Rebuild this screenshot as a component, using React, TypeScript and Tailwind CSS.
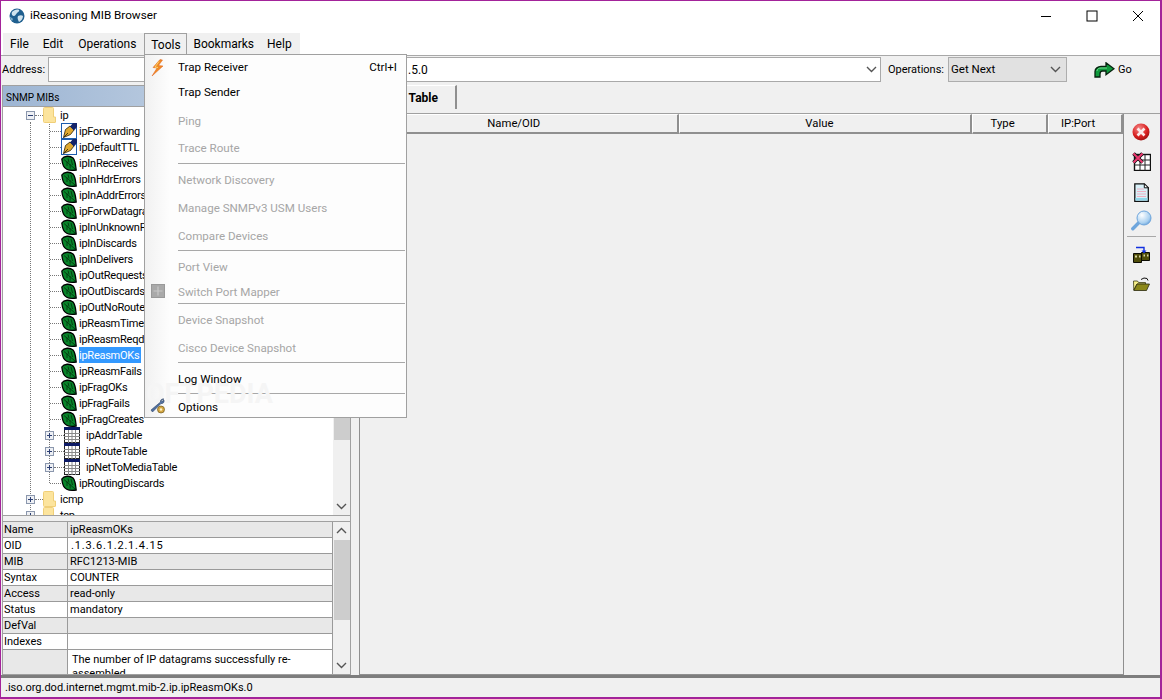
import React from "react";

const leaves = [
  "ipInReceives", "ipInHdrErrors", "ipInAddrErrors", "ipForwDatagrams", "ipInUnknownProtos",
  "ipInDiscards", "ipInDelivers", "ipOutRequests", "ipOutDiscards", "ipOutNoRoutes",
  "ipReasmTimeout", "ipReasmReqds", "ipReasmOKs", "ipReasmFails", "ipFragOKs", "ipFragFails", "ipFragCreates",
];

const props = [
  ["Name", "ipReasmOKs"], ["OID", ".1.3.6.1.2.1.4.15"], ["MIB", "RFC1213-MIB"], ["Syntax", "COUNTER"],
  ["Access", "read-only"], ["Status", "mandatory"], ["DefVal", ""], ["Indexes", ""],
];

const Chevron = ({ up = false, className = "" }: { up?: boolean; className?: string }) => (
  <svg width="11" height="7" viewBox="0 0 11 7" className={className}>
    <polyline points={up ? "1,6 5.5,1.5 10,6" : "1,1 5.5,5.5 10,1"} fill="none" stroke="#555" strokeWidth="1.4" />
  </svg>
);

const Globe = () => (
  <svg width="16" height="16" viewBox="0 0 16 16">
    <circle cx="8" cy="8" r="7.5" fill="#1f5f8f" />
    <path d="M3 4c2-2 5-3 7-2 1 1-1 2-2 3s-2 3-3 3-3-1-2-4zM9 8c2-1 4-1 5 0 0 3-2 5-4 6-1-2-2-4-1-6z" fill="#cfe3ee" />
    <path d="M1 9c1 0 2 1 3 2l-1 2C2 12 1 10 1 9z" fill="#7fb0cc" />
  </svg>
);

const Bolt = () => (
  <svg width="14" height="18" viewBox="0 0 14 18">
    <path d="M9 0.5 2 8.5l4 .5-5 8 11-10-4.500-.5 4-5.500z" fill="#f08a24" stroke="#e0601a" strokeWidth=".5" />
    <path d="M8 2.500 4 8l3 .5" fill="none" stroke="#fbd26a" strokeWidth="1" />
  </svg>
);

const Wrench = () => (
  <svg width="16" height="16" viewBox="0 0 16 16">
    <path d="M14 1c-2-.5-4 1-3.500 3L1 12l1.500 2 8.500-8.500c2 .5 3.500-1 3-3.500l-2 1.500-1-1z" fill="#4f6fa0" stroke="#2f4468" strokeWidth=".6" />
    <circle cx="11" cy="11.500" r="3.500" fill="#d6a842" stroke="#6d5518" strokeWidth=".7" />
    <circle cx="11" cy="11.500" r="1.200" fill="#fff3c8" />
  </svg>
);

const MoveIcon = () => (
  <svg width="14" height="14" viewBox="0 0 14 14">
    <rect x=".5" y=".5" width="13" height="13" fill="#a9a9a9" stroke="#999" />
    <path d="M7 2.500v9M2.500 7h9" stroke="#c8c8c8" strokeWidth="1.200" />
  </svg>
);

const Pen = () => (
  <svg width="16" height="16" viewBox="0 0 16 16">
    <rect x=".5" y=".5" width="15" height="15" fill="#fff" stroke="#1c5cae" />
    <path d="M2.500 14.500 4.500 6.500 9 3l4 4-3.500 4.500z" fill="#e0a92f" stroke="#2a1e06" strokeWidth=".8" />
    <path d="M9 3.500 12 0h4v4l-3 3.500z" fill="#14246a" />
    <path d="M2.500 14.500l4.500-4.500" stroke="#2a1e06" strokeWidth=".8" />
  </svg>
);

const Leaf = () => (
  <svg width="16" height="16" viewBox="0 0 16 16">
    <path d="M.8 4C3 .5 9 .5 12 3c2.500 2.500 2.500 7 3.200 12C10 15.800 4.500 15 2.500 11 1.300 8.500 1 6 .8 4z" fill="#08842a" stroke="#000" strokeWidth="1.300" />
    <path d="M3 4.500 14 14M6 6.500 6 11M9 9l.2 4.500M7 3.500 8 7.500M10 4l1.500 6" stroke="#03380f" strokeWidth=".9" fill="none" />
  </svg>
);

const TableIcon = () => (
  <svg width="16" height="16" viewBox="0 0 16 16">
    <rect x=".5" y=".5" width="15" height="15" fill="#fff" stroke="#222" />
    <rect x="0" y="0" width="16" height="3" fill="#0c1a66" />
    <path d="M0 6.500h16M0 9.500h16M0 12.500h16M4.500 3v13M8 3v13M11.500 3v13" stroke="#8a8a8a" strokeWidth="1" />
  </svg>
);

const Folder = () => (
  <svg width="13" height="16" viewBox="0 0 13 16">
    <path d="M.5 1.500Q.5.500 1.500.500h8q1 0 1 1V10h2v5q0 .5-.5.500H1.500q-1 0-1-1z" fill="#fce49d" stroke="#f0cf78" />
  </svg>
);

const RedX = () => (
  <svg width="18" height="18" viewBox="0 0 18 18">
    <defs>
      <radialGradient id="redball" cx=".4" cy=".3" r=".8">
        <stop offset="0" stopColor="#f58a8a" />
        <stop offset=".6" stopColor="#d81e1e" />
        <stop offset="1" stopColor="#8a0f0f" />
      </radialGradient>
    </defs>
    <circle cx="9" cy="9" r="8.500" fill="url(#redball)" />
    <path d="M5.500 5.500l7 7M12.500 5.500l-7 7" stroke="#fbeaea" strokeWidth="2.600" />
  </svg>
);

const TableX = () => (
  <svg width="19" height="19" viewBox="0 0 19 19">
    <rect x="2.500" y="2.500" width="16" height="16" fill="#fff" stroke="#111" strokeWidth="1.400" />
    <path d="M2.500 8h16M2.500 13h16M8 2.500v16M13 2.500v16" stroke="#222" />
    <path d="M1.500 1.500l9 9M10.500 1.500l-9 9" stroke="#111" strokeWidth="3.600" />
    <path d="M1.500 1.500l9 9M10.500 1.500l-9 9" stroke="#ee3a72" strokeWidth="2" />
  </svg>
);

const Doc = () => (
  <svg width="15" height="19" viewBox="0 0 15 19">
    <path d="M.8.800h9.500l4 4v13.500H.8z" fill="#d8f0f8" stroke="#111" strokeWidth="1.300" />
    <path d="M10.300.800v4h4z" fill="#fff" stroke="#111" />
    <path d="M3 6h7M3 8.500h9M3 11h9M3 13.500h9" stroke="#f2a7bb" strokeWidth=".9" />
    <rect x="1.500" y="15" width="12" height="2.500" fill="#8fd6ea" />
  </svg>
);

const Magnifier = () => (
  <svg width="21" height="21" viewBox="0 0 21 21">
    <defs>
      <radialGradient id="lens" cx=".35" cy=".3" r=".8">
        <stop offset="0" stopColor="#ffffff" />
        <stop offset=".7" stopColor="#a9d0f0" />
        <stop offset="1" stopColor="#5f9ad6" />
      </radialGradient>
    </defs>
    <path d="M8.500 12 1.800 18.700" stroke="#6fa6dc" strokeWidth="3.400" strokeLinecap="round" />
    <circle cx="13" cy="8" r="7" fill="url(#lens)" stroke="#6fa6dc" strokeWidth="1" />
  </svg>
);

const Film = () => (
  <svg width="17" height="17" viewBox="0 0 17 17">
    <path d="M.5 7.500h8v9h-8zM8.500 6.500h8v8h-8z" fill="#4f4d0a" stroke="#0c0c04" />
    <path d="M2 9.500h2v2H2zM6 9.500h1.500v2H6zM10.500 8.500h1.500v2h-1.500zM14 8.500h1.500v2H14z" fill="#d9d6a0" />
    <path d="M3 1.500h8V6" fill="none" stroke="#1230e0" strokeWidth="1.400" />
    <path d="M8.500 4.500h5L11 7.500z" fill="#1230e0" />
  </svg>
);

const OpenFolder = () => (
  <svg width="17" height="14" viewBox="0 0 17 14">
    <path d="M.5 4h4l1 1.500h7V7H4L.8 13z" fill="#f7f08a" stroke="#3a3a10" strokeWidth=".8" />
    <path d="M4 7h12.500l-3 6.500H.8z" fill="#8c8818" stroke="#2a2a0c" strokeWidth=".8" />
    <path d="M8 2.500Q11 0 14 1.500l1 2" fill="none" stroke="#111" />
  </svg>
);

const GoArrow = () => (
  <svg width="21" height="16" viewBox="0 0 21 16">
    <path d="M1 15V9.500C1 6.500 4 4.500 7 4.500h5V.8L20 6.800l-8 6V9H8.500C6.500 9 6 10.500 6 12v3z" fill="#0f9a3c" stroke="#07220f" strokeWidth="1.300" />
    <path d="M3 9c0-2 2-3 4-3h6" fill="none" stroke="#6fdc8e" strokeWidth="1" />
  </svg>
);

const Expander = ({ open = false }: { open?: boolean }) => (
  <span className="relative flex w-[9px] h-[9px] shrink-0 items-center justify-center border border-[#8b97ad] bg-[#eef0f4]">
    <span className="w-[5px] h-px bg-[#2c3f73]" />
    {!open && <span className="absolute w-px h-[5px] bg-[#2c3f73]" />}
  </span>
);

const Dash = ({ w }: { w: string }) => <span className={`${w} shrink-0 border-t border-dotted border-[#777]`} />;

const LeafRow = ({ name, pen = false }: { name: string; pen?: boolean }) => {
  const selected = name === "ipReasmOKs";
  return (
    <div className="flex h-4 items-center whitespace-nowrap">
      <span className="w-[47px] shrink-0" />
      <Dash w="w-[11px]" />
      <span className="shrink-0">{pen ? <Pen /> : <Leaf />}</span>
      <span className={selected ? "ml-[2px] h-4 pt-px pr-[2px] bg-[#3399ff] text-white leading-4" : "ml-[2px] h-4 pt-px leading-4"}>{name}</span>
    </div>
  );
};

const TableRow = ({ name }: { name: string }) => (
  <div className="flex h-4 items-center whitespace-nowrap">
    <span className="w-[42px] shrink-0" />
    <Expander />
    <Dash w="w-[10px]" />
    <TableIcon />
    <span className="ml-[6px] h-4 pt-px leading-4">{name}</span>
  </div>
);

const FolderRow = ({ name, open = false }: { name: string; open?: boolean }) => (
  <div className="flex h-4 items-center whitespace-nowrap">
    <span className="w-[23px] shrink-0" />
    <Expander open={open} />
    <Dash w="w-[8px]" />
    <Folder />
    <span className="ml-[4px] h-4 pt-px leading-4">{name}</span>
  </div>
);

const MenuItem = ({ label, h, disabled = false, flush = false, icon, shortcut }: { label: string; h: string; disabled?: boolean; flush?: boolean; icon?: React.ReactNode; shortcut?: string }) => (
  <div className={`relative flex items-center justify-between pl-[33px] pr-[9px] ${h} ${flush ? "pt-[1px]" : "pt-[3px]"} ${disabled ? "text-[#a6a6a6]" : "text-black"}`}>
    {icon && <span className="absolute left-[5px] top-1/2 -translate-y-1/2 flex w-[16px] justify-center">{icon}</span>}
    <span>{label}</span>
    {shortcut && <span>{shortcut}</span>}
  </div>
);

const MenuSep = () => (
  <div className="h-[3px] pl-[33px] pr-[1px] flex items-center">
    <div className="h-px w-full bg-[#a8a8a8]" />
  </div>
);

const ToolsMenu = () => (
  <div className="absolute left-[143px] top-[53px] w-[263px] h-[364px] border border-[#a0a0a0] bg-gradient-to-r from-[#f1f1f1] from-0% via-[#fdfdfd] via-[9.500%] to-[#fdfdfd] z-10 overflow-hidden text-[11.6px]">
    <div className="absolute left-[1px] top-[326px] text-[27px] font-bold leading-none text-[#f5f5f5] pointer-events-none">OFTPEDIA</div>
    <MenuItem label="Trap Receiver" h="h-[25px]" icon={<Bolt />} shortcut="Ctrl+I" flush />
    <MenuItem label="Trap Sender" h="h-[25px]" flush />
    <MenuItem label="Ping" h="h-[30px]" disabled />
    <MenuItem label="Trace Route" h="h-[27px]" disabled flush />
    <MenuSep />
    <MenuItem label="Network Discovery" h="h-[28px]" disabled />
    <MenuItem label="Manage SNMPv3 USM Users" h="h-[28px]" disabled />
    <MenuItem label="Compare Devices" h="h-[28px]" disabled />
    <MenuSep />
    <MenuItem label="Port View" h="h-[28px]" disabled />
    <MenuItem label="Switch Port Mapper" h="h-[22px]" disabled icon={<MoveIcon />} />
    <MenuSep />
    <MenuItem label="Device Snapshot" h="h-[28px]" disabled />
    <MenuItem label="Cisco Device Snapshot" h="h-[28px]" disabled />
    <MenuSep />
    <MenuItem label="Log Window" h="h-[28px]" />
    <MenuSep />
    <MenuItem label="Options" h="h-[22px]" icon={<Wrench />} />
  </div>
);

const ScrollCol = ({ thumbTop, thumbHeight }: { thumbTop: string; thumbHeight: string }) => (
  <div className="flex w-[17px] shrink-0 flex-col items-center bg-[#f0f0f0]">
    <div className="flex h-[17px] shrink-0 items-center justify-center">
      <Chevron up />
    </div>
    <div className={`${thumbTop} ${thumbHeight} w-[16px] shrink-0 bg-[#cdcdcd]`} />
    <div className="flex-1" />
    <div className="flex h-[17px] shrink-0 items-center justify-center">
      <Chevron />
    </div>
  </div>
);

const HeaderCell = ({ label, w }: { label: string; w: string }) => (
  <div className={`${w} flex h-[20px] items-center justify-center border-t border-l border-t-white border-l-white border-r-2 border-b-2 border-r-[#8f8f8f] border-b-[#8f8f8f] pt-[2px] text-[11.3px]`}>
    {label}
  </div>
);

export default function App() {
  return (
    <div className="relative flex h-[699px] w-[1162px] flex-col overflow-hidden border-t border-l border-r-2 border-b-2 border-[#a3239a] bg-white font-['Roboto',_'Liberation_Sans',_sans-serif] text-[11px] text-black">
      {/* Title bar */}
      <div className="flex h-[32px] shrink-0 items-center bg-white pb-[3px]">
        <div className="ml-[8px]">
          <Globe />
        </div>
        <span className="ml-[5px] text-[11.7px]">iReasoning MIB Browser</span>
        <div className="ml-auto flex items-center">
          <svg width="12" height="12" viewBox="0 0 12 12" className="mr-[34px]">
            <path d="M1 6.500h10" stroke="#000" strokeWidth="1" />
          </svg>
          <svg width="12" height="12" viewBox="0 0 12 12" className="mr-[34px]">
            <rect x="1" y="1" width="10" height="10" fill="none" stroke="#000" strokeWidth="1" />
          </svg>
          <svg width="12" height="12" viewBox="0 0 12 12" className="mr-[16px]">
            <path d="M1 1l10 10M11 1L1 11" stroke="#000" strokeWidth="1" />
          </svg>
        </div>
      </div>

      {/* Menu bar */}
      <div className="flex h-[23px] shrink-0 border-b border-[#a8a8a8] bg-white pl-[2px] text-[12px]">
        <div className="flex h-[22px] w-[297px] items-center bg-[#f0f0f0]">
          <span className="ml-[7px]">File</span>
          <span className="ml-[14px]">Edit</span>
          <span className="ml-[15px]">Operations</span>
          <span className="ml-[8px] flex h-[22px] w-[43px] items-center justify-center border border-b-0 border-[#a0a0a0]">Tools</span>
          <span className="ml-[6px]">Bookmarks</span>
          <span className="ml-[13px]">Help</span>
        </div>
      </div>

      {/* Address row */}
      <div className="flex h-[29px] shrink-0 items-start bg-[#f0f0f0] pt-[1px]">
        <span className="ml-[1px] flex h-[25px] w-[46px] items-center pt-[2px]">Address:</span>
        <div className="flex h-[25px] w-[833px] items-center border border-[#a9a9a9] bg-white">
          <span className="ml-[359px] text-[12px]">.5.0</span>
          <Chevron className="ml-auto mr-[3px]" />
        </div>
        <span className="ml-[7px] flex h-[25px] w-[56px] items-center pt-[2px]">Operations:</span>
        <div className="ml-[4px] flex h-[25px] w-[119px] items-center border border-[#adadad] bg-[#e1e1e1] pl-[2px] text-[11.5px]">
          <span>Get Next</span>
          <Chevron className="ml-auto mr-[5px]" />
        </div>
        <div className="ml-[27px] flex h-[25px] items-center">
          <GoArrow />
          <span className="ml-[3px] pt-[2px]">Go</span>
        </div>
      </div>

      {/* Body */}
      <div className="flex min-h-0 flex-1 bg-[#f0f0f0]">
        {/* Left panel */}
        <div className="ml-[1px] flex w-[349px] shrink-0 flex-col border border-[#a0a0a0]">
          <div className="flex h-[20px] shrink-0 items-center bg-gradient-to-r from-[#9db5d3] to-[#d5e0ec] pl-[3px] pt-[2px] text-[10px]">SNMP MIBs</div>
          <div className="flex h-[410px] shrink-0 border-t border-b border-[#a0a0a0] bg-white">
            <div className="relative min-w-0 flex-1 overflow-hidden tracking-[-0.25px]">
              <div className="absolute left-[27px] top-[15px] h-[400px] border-l border-dotted border-[#777]" />
              <div className="absolute left-[46px] top-[15px] h-[361px] border-l border-dotted border-[#777]" />
              <div className="relative">
                <FolderRow name="ip" open />
                <LeafRow name="ipForwarding" pen />
                <LeafRow name="ipDefaultTTL" pen />
                {leaves.map((n) => (
                  <LeafRow key={n} name={n} />
                ))}
                <TableRow name="ipAddrTable" />
                <TableRow name="ipRouteTable" />
                <TableRow name="ipNetToMediaTable" />
                <LeafRow name="ipRoutingDiscards" />
                <FolderRow name="icmp" />
                <FolderRow name="tcp" />
              </div>
            </div>
            <ScrollCol thumbTop="mt-[60px]" thumbHeight="h-[256px]" />
          </div>
          <div className="h-[5px] shrink-0" />
          <div className="flex min-h-0 flex-1 border-t border-[#a0a0a0] bg-white">
            <div className="min-w-0 flex-1 overflow-hidden">
              {props.map(([k, v], i) => (
                <div key={k} className={`flex h-4 border-b border-[#9a9a9a] ${i % 2 === 0 ? "bg-[#e8e8e8]" : "bg-white"}`}>
                  <div className="w-[65px] shrink-0 border-r border-[#9a9a9a] pl-px leading-[15px]">{k}</div>
                  <div className={k === "OID" ? "pl-[3px] leading-[15px] tracking-[0.8px]" : "pl-[2px] leading-[15px]"}>{v}</div>
                </div>
              ))}
              <div className="flex h-[40px]">
                <div className="w-[65px] shrink-0 border-r border-[#9a9a9a] bg-[#e8e8e8]" />
                <div className="pl-[4px] pr-[4px] pt-[3px] leading-[14px]">The number of IP datagrams successfully re-assembled</div>
              </div>
            </div>
            <div className="w-px shrink-0 bg-[#9a9a9a]" />
            <ScrollCol thumbTop="mt-[1px]" thumbHeight="h-[80px]" />
          </div>
        </div>

        {/* Splitter */}
        <div className="w-[8px] shrink-0" />

        {/* Right panel */}
        <div className="flex min-w-0 flex-1 flex-col">
          <div className="flex h-[28px] shrink-0 items-end">
            <div className="mb-[4px] flex h-[24px] w-[98px] items-center justify-end border-t border-r-2 border-t-white border-r-[#8f8f8f] pr-[17px] text-[12px] font-bold">Table</div>
          </div>
          <div className="flex min-h-0 flex-1 border-t border-[#a0a0a0]">
            <div className="flex w-[765px] shrink-0 flex-col border-r border-b border-l border-[#8f8f8f]">
              <div className="flex">
                <HeaderCell label="Name/OID" w="w-[319px] pr-[10px]" />
                <HeaderCell label="Value" w="w-[294px] pr-[11px]" />
                <HeaderCell label="Type" w="w-[76px] pr-[14px]" />
                <HeaderCell label="IP:Port" w="w-[75px] pr-[14px]" />
              </div>
            </div>
            <div className="flex flex-1 flex-col items-center pt-[9px] pr-[2px]">
              <div className="flex h-[18px] items-center"><RedX /></div>
              <div className="mt-[11px] flex h-[19px] items-center"><TableX /></div>
              <div className="mt-[12px] flex h-[19px] items-center"><Doc /></div>
              <div className="mt-[8px] flex h-[21px] items-center"><Magnifier /></div>
              <div className="mt-[5px] h-px w-[29px] bg-[#a8a8a8]" />
              <div className="mt-[9px] flex h-[17px] items-center"><Film /></div>
              <div className="mt-[14px] flex h-[14px] items-center"><OpenFolder /></div>
            </div>
          </div>
        </div>
      </div>

      {/* Status bar */}
      <div className="flex h-[22px] shrink-0 items-center border-t-[3px] border-[#7d7d7d] bg-[#f0f0f0] pl-[4px] pt-[2px]">.iso.org.dod.internet.mgmt.mib-2.ip.ipReasmOKs.0</div>

      <ToolsMenu />
    </div>
  );
}
